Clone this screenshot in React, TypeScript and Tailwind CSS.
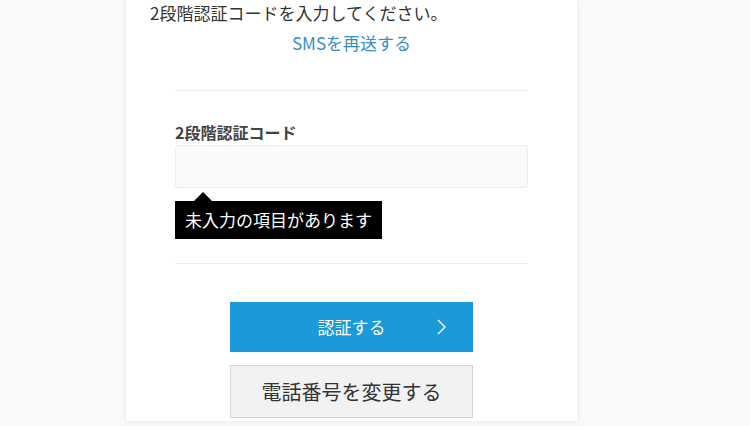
export default function App() {
  return (
    <div
      className="w-full h-[426px] overflow-hidden bg-[#f7f9fb] pl-[126px]"
      style={{ fontFamily: '"Noto Sans CJK JP", "Noto Sans", sans-serif' }}
    >
      <div className="w-[451px] h-[421px] bg-white shadow-[0_0_6px_rgba(0,0,0,0.08)]">
        <p className="pl-[24px] pt-[1px] text-[17px] leading-[24px] text-[#333]">
          2段階認証コードを入力してください。
        </p>
        <p className="mt-[6px] text-center text-[17px] leading-[24px] text-[#3a8ec4]">
          SMSを再送する
        </p>

        <div className="mx-[49px] mt-[35px] border-t border-[#eeeeee]" />

        <div className="mx-[49px] mt-[29px]">
          <label className="block text-[16px] font-bold leading-[24px] text-[#444]">
            2段階認証コード
          </label>
          <div className="mt-[1px] h-[43px] rounded-[3px] border border-[#eeeeee] bg-[#fafafa]" />

          {/* validation tooltip */}
          <div className="relative mt-[13px] inline-block bg-black px-[10px] text-[17px] leading-[38px] text-white">
            <span className="absolute -top-[9px] left-[18px] h-0 w-0 border-x-[10px] border-b-[10px] border-x-transparent border-b-black" />
            未入力の項目があります
          </div>
        </div>

        <div className="mx-[49px] mt-[24px] border-t border-[#eeeeee]" />

        <div className="mt-[38px] flex flex-col items-center gap-[13px]">
          <button className="relative flex h-[50px] w-[243px] items-center justify-center bg-[#1a9ad9] text-[17px] text-white">
            認証する
            <svg
              className="absolute right-[27px] top-[17px]"
              width="9"
              height="16"
              viewBox="0 0 9 16"
              fill="none"
              stroke="white"
              strokeWidth="1.3"
            >
              <path d="M1 1l7 7-7 7" />
            </svg>
          </button>
          <button className="flex h-[53px] w-[243px] items-center justify-center border border-[#d4d4d4] bg-[#f2f2f2] text-[20px] text-[#333]">
            電話番号を変更する
          </button>
        </div>
      </div>
    </div>
  );
}
